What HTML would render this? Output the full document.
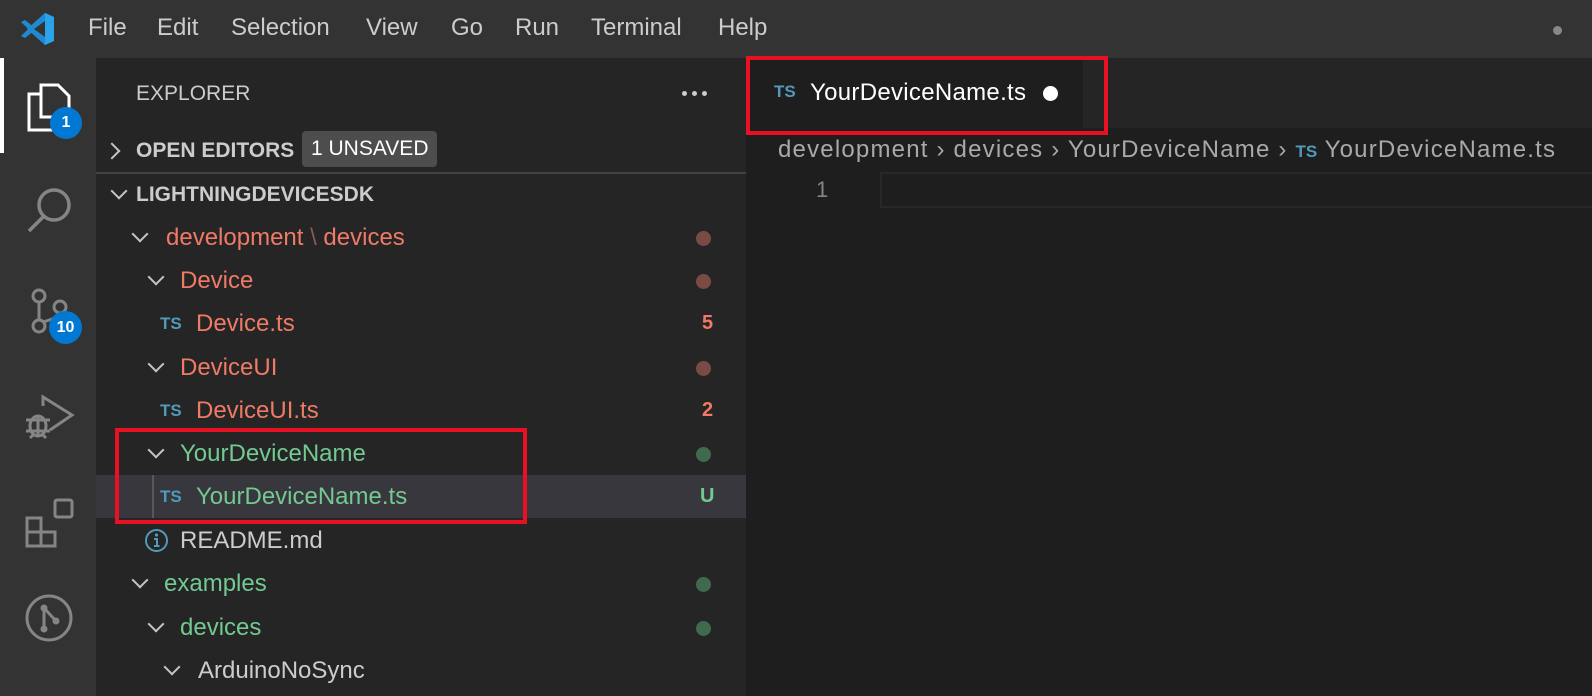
<!DOCTYPE html>
<html><head><meta charset="utf-8"><style>
*{margin:0;padding:0;box-sizing:border-box}
body{width:1592px;height:696px;overflow:hidden;background:#1e1e1e;font-family:"Liberation Sans",sans-serif;position:relative}
.a{position:absolute}
.title{left:0;top:0;width:1592px;height:58px;background:#333333}
.menu{top:14px;font-size:24px;color:#cccccc}
.act{left:0;top:58px;width:96px;height:638px;background:#333333}
.side{left:96px;top:58px;width:650px;height:638px;background:#252526}
.row{position:absolute;left:96px;width:650px;height:43px;font-size:24px;line-height:43px;white-space:nowrap}
.red{color:#ef7a66}.grn{color:#73c991}.wht{color:#cccccc}
.ts{font-weight:bold;color:#519aba;font-size:17px;letter-spacing:0}
.chev{position:absolute;width:12px;height:12px;border-right:2px solid #c5c5c5;border-bottom:2px solid #c5c5c5;transform:rotate(45deg)}
.dot{position:absolute;left:600px;top:15px;width:15px;height:15px;border-radius:50%}
.badge{position:absolute;background:#0078d4;color:#fff;border-radius:50%;font-weight:bold;font-size:16px;text-align:center}
</style></head><body>
<div class="a title"></div>
<svg class="a" style="left:19px;top:12px" width="36" height="34" viewBox="0 0 36 34"><path d="M26 1 L35 5 V29 L26 33 L8 17 Z" fill="#1f8ad2"/><path d="M26 1 L35 5 V29 L26 33 Z" fill="#2ba3ea"/><path d="M2 10 L6 8 L26 24 V33 Z M2 24 L6 26 L26 10 V1 Z" fill="#1f8ad2"/><path d="M26 9 L15 17 L26 25 Z" fill="#333"/></svg>
<div class="a menu" style="left:88px">File</div>
<div class="a menu" style="left:157px">Edit</div>
<div class="a menu" style="left:231px">Selection</div>
<div class="a menu" style="left:366px">View</div>
<div class="a menu" style="left:451px">Go</div>
<div class="a menu" style="left:515px">Run</div>
<div class="a menu" style="left:591px">Terminal</div>
<div class="a menu" style="left:718px">Help</div>
<div class="a" style="left:1553px;top:26px;width:9px;height:9px;border-radius:50%;background:#888"></div>

<div class="a act"></div>
<div class="a" style="left:0;top:58px;width:4px;height:95px;background:#fff"></div>
<svg class="a" style="left:26px;top:82px" width="46" height="50" viewBox="0 0 46 50"><path d="M15 3 H32 L43 14 V35 H15 Z" fill="none" stroke="#fff" stroke-width="3"/><path d="M15 12 H3 V48 H30 V35" fill="none" stroke="#fff" stroke-width="3"/></svg>
<div class="badge" style="left:50px;top:107px;width:32px;height:32px;line-height:32px">1</div>
<svg class="a" style="left:26px;top:185px" width="50" height="50" viewBox="0 0 50 50"><circle cx="28" cy="20" r="15" fill="none" stroke="#858585" stroke-width="3.5"/><path d="M18 31 L3 46" stroke="#858585" stroke-width="3.5"/></svg>
<svg class="a" style="left:26px;top:288px" width="50" height="50" viewBox="0 0 50 50"><circle cx="13" cy="8" r="6" fill="none" stroke="#858585" stroke-width="3"/><circle cx="34" cy="19" r="6" fill="none" stroke="#858585" stroke-width="3"/><circle cx="13" cy="38" r="6" fill="none" stroke="#858585" stroke-width="3"/><path d="M13 14 V32 M34 25 Q32 30 17 34" fill="none" stroke="#858585" stroke-width="3"/></svg>
<div class="badge" style="left:49px;top:311px;width:33px;height:33px;line-height:33px">10</div>
<svg class="a" style="left:24px;top:393px" width="52" height="50" viewBox="0 0 52 50"><path d="M19 13 V4 L48 22 L26 37" fill="none" stroke="#858585" stroke-width="3"/><ellipse cx="14" cy="33" rx="8" ry="10" fill="none" stroke="#858585" stroke-width="3"/><path d="M2 27 H26 M2 38 H26 M6 45 L9 42 M22 45 L19 42 M14 23 V44" stroke="#858585" stroke-width="3"/></svg>
<svg class="a" style="left:24px;top:496px" width="52" height="52" viewBox="0 0 52 52"><path d="M3 22 H17 V36 H31 V50 H3 Z M3 36 H17 V50 M17 36 V22" fill="none" stroke="#858585" stroke-width="3"/><rect x="31" y="4" width="17" height="17" rx="2" fill="none" stroke="#858585" stroke-width="3"/></svg>
<svg class="a" style="left:24px;top:593px" width="52" height="52" viewBox="0 0 52 52"><circle cx="25" cy="25" r="22" fill="none" stroke="#858585" stroke-width="3"/><circle cx="20" cy="15" r="3.5" fill="#858585"/><circle cx="20" cy="36" r="3.5" fill="#858585"/><circle cx="32" cy="28" r="3.5" fill="#858585"/><path d="M20 15 V36 M20 15 L32 28" stroke="#858585" stroke-width="3"/></svg>

<div class="a side"></div>
<div class="a wht" style="left:136px;top:82px;font-size:21px">EXPLORER</div>
<div class="a" style="left:682px;top:91px;width:5px;height:5px;border-radius:50%;background:#ccc;box-shadow:10px 0 #ccc,20px 0 #ccc"></div>
<div class="row" style="top:129px"><div class="chev" style="left:10px;top:16px;transform:rotate(-45deg)"></div><span class="a wht" style="left:40px;font-weight:bold;font-size:21px">OPEN EDITORS</span><span class="a" style="left:206px;top:2px;height:36px;line-height:36px;padding:0 9px;background:#4d4d4d;color:#fff;border-radius:4px;font-size:21px">1 UNSAVED</span></div>
<div class="a" style="left:96px;top:172px;width:650px;height:2px;background:#444"></div>
<div class="row" style="top:173px"><div class="chev" style="left:17px;top:12px"></div><span class="a wht" style="left:40px;font-weight:bold;font-size:21px">LIGHTNINGDEVICESDK</span></div>
<div class="row" style="top:216px"><div class="chev" style="left:38px;top:12px"></div><span class="a red" style="left:70px">development <span style="color:#8a5a50">\</span> devices</span><div class="dot" style="background:#7a4b44"></div></div>
<div class="row" style="top:259px"><div class="chev" style="left:54px;top:12px"></div><span class="a red" style="left:84px">Device</span><div class="dot" style="background:#7a4b44"></div></div>
<div class="row" style="top:302px"><span class="a ts" style="left:64px">TS</span><span class="a red" style="left:100px">Device.ts</span><span class="a red" style="left:606px;font-weight:bold;font-size:20px">5</span></div>
<div class="row" style="top:346px"><div class="chev" style="left:54px;top:12px"></div><span class="a red" style="left:84px">DeviceUI</span><div class="dot" style="background:#7a4b44"></div></div>
<div class="row" style="top:389px"><span class="a ts" style="left:64px">TS</span><span class="a red" style="left:100px">DeviceUI.ts</span><span class="a red" style="left:606px;font-weight:bold;font-size:20px">2</span></div>
<div class="row" style="top:432px"><div class="chev" style="left:54px;top:12px"></div><span class="a grn" style="left:84px">YourDeviceName</span><div class="dot" style="background:#3f6a4e"></div></div>
<div class="row" style="top:475px;background:#37373d"><div class="a" style="left:56px;top:0;width:2px;height:43px;background:#585858"></div><span class="a ts" style="left:64px">TS</span><span class="a grn" style="left:100px">YourDeviceName.ts</span><span class="a grn" style="left:604px;font-weight:bold;font-size:20px">U</span></div>
<div class="row" style="top:519px"><svg class="a" style="left:48px;top:9px" width="25" height="25" viewBox="0 0 25 25"><circle cx="12.5" cy="12.5" r="10.5" fill="none" stroke="#519aba" stroke-width="2"/><circle cx="12.5" cy="7" r="1.6" fill="#519aba"/><path d="M10 11 H13 V18 M10 18 H15.5" stroke="#519aba" stroke-width="2" fill="none"/></svg><span class="a wht" style="left:84px">README.md</span></div>
<div class="row" style="top:562px"><div class="chev" style="left:38px;top:12px"></div><span class="a grn" style="left:68px">examples</span><div class="dot" style="background:#3f6a4e"></div></div>
<div class="row" style="top:606px"><div class="chev" style="left:54px;top:12px"></div><span class="a grn" style="left:84px">devices</span><div class="dot" style="background:#3f6a4e"></div></div>
<div class="row" style="top:649px"><div class="chev" style="left:70px;top:12px"></div><span class="a wht" style="left:102px">ArduinoNoSync</span></div>

<div class="a" style="left:746px;top:58px;width:846px;height:70px;background:#252526"></div>
<div class="a" style="left:746px;top:58px;width:337px;height:70px;background:#1e1e1e"></div>
<span class="a ts" style="left:774px;top:82px">TS</span>
<span class="a" style="left:810px;top:79px;font-size:24px;color:#fff;letter-spacing:0.3px">YourDeviceName.ts</span>
<div class="a" style="left:1043px;top:86px;width:15px;height:15px;border-radius:50%;background:#fff"></div>
<div class="a" style="left:778px;top:136px;font-size:24px;color:#a9a9a9;white-space:nowrap;letter-spacing:1.2px">development &#x203A; devices &#x203A; YourDeviceName &#x203A; <span class="ts">TS</span> YourDeviceName.ts</div>
<div class="a" style="left:816px;top:177px;font-size:22px;color:#858585">1</div>
<div class="a" style="left:880px;top:172px;width:720px;height:36px;border:2px solid #282828"></div>

<div class="a" style="left:746px;top:56px;width:362px;height:79px;border:4px solid #e81123"></div>
<div class="a" style="left:115px;top:428px;width:412px;height:96px;border:4px solid #e81123"></div>
</body></html>
